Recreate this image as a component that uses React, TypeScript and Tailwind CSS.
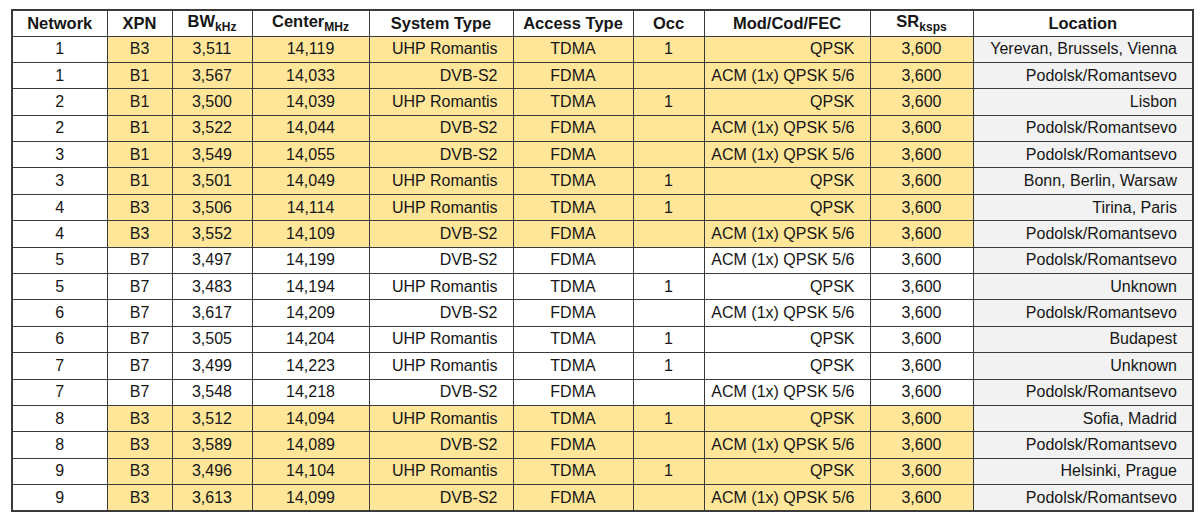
const rows: [string, string, string, string, string, string, string, string, string][] = [
  ['1', 'B3', '3,511', '14,119', 'UHP Romantis', 'TDMA', '1', 'QPSK', 'Yerevan, Brussels, Vienna'],
  ['1', 'B1', '3,567', '14,033', 'DVB-S2', 'FDMA', '', 'ACM (1x) QPSK 5/6', 'Podolsk/Romantsevo'],
  ['2', 'B1', '3,500', '14,039', 'UHP Romantis', 'TDMA', '1', 'QPSK', 'Lisbon'],
  ['2', 'B1', '3,522', '14,044', 'DVB-S2', 'FDMA', '', 'ACM (1x) QPSK 5/6', 'Podolsk/Romantsevo'],
  ['3', 'B1', '3,549', '14,055', 'DVB-S2', 'FDMA', '', 'ACM (1x) QPSK 5/6', 'Podolsk/Romantsevo'],
  ['3', 'B1', '3,501', '14,049', 'UHP Romantis', 'TDMA', '1', 'QPSK', 'Bonn, Berlin, Warsaw'],
  ['4', 'B3', '3,506', '14,114', 'UHP Romantis', 'TDMA', '1', 'QPSK', 'Tirina, Paris'],
  ['4', 'B3', '3,552', '14,109', 'DVB-S2', 'FDMA', '', 'ACM (1x) QPSK 5/6', 'Podolsk/Romantsevo'],
  ['5', 'B7', '3,497', '14,199', 'DVB-S2', 'FDMA', '', 'ACM (1x) QPSK 5/6', 'Podolsk/Romantsevo'],
  ['5', 'B7', '3,483', '14,194', 'UHP Romantis', 'TDMA', '1', 'QPSK', 'Unknown'],
  ['6', 'B7', '3,617', '14,209', 'DVB-S2', 'FDMA', '', 'ACM (1x) QPSK 5/6', 'Podolsk/Romantsevo'],
  ['6', 'B7', '3,505', '14,204', 'UHP Romantis', 'TDMA', '1', 'QPSK', 'Budapest'],
  ['7', 'B7', '3,499', '14,223', 'UHP Romantis', 'TDMA', '1', 'QPSK', 'Unknown'],
  ['7', 'B7', '3,548', '14,218', 'DVB-S2', 'FDMA', '', 'ACM (1x) QPSK 5/6', 'Podolsk/Romantsevo'],
  ['8', 'B3', '3,512', '14,094', 'UHP Romantis', 'TDMA', '1', 'QPSK', 'Sofia, Madrid'],
  ['8', 'B3', '3,589', '14,089', 'DVB-S2', 'FDMA', '', 'ACM (1x) QPSK 5/6', 'Podolsk/Romantsevo'],
  ['9', 'B3', '3,496', '14,104', 'UHP Romantis', 'TDMA', '1', 'QPSK', 'Helsinki, Prague'],
  ['9', 'B3', '3,613', '14,099', 'DVB-S2', 'FDMA', '', 'ACM (1x) QPSK 5/6', 'Podolsk/Romantsevo'],
];

const widths = ['w-[95px]', 'w-[65px]', 'w-[80px]', 'w-[117px]', 'w-[144px]', 'w-[120px]', 'w-[71px]', 'w-[166px]', 'w-[103px]', 'w-[220px]'];

// Excel-ish cell: thin dark border, no wrapping
const cell = 'border border-[#3a3a3a] px-[4px] p-0 leading-none whitespace-nowrap overflow-hidden';

function Sub({ children }: { children: string }) {
  return <span className="text-[12px] align-[-4px]">{children}</span>;
}

export default function App() {
  return (
    <div className="bg-white w-[1200px] h-[519px] overflow-hidden pt-[9px] pl-[11px] font-['Liberation_Sans',Arial,sans-serif] text-[16px] text-[#161616]">
      <table className="table-fixed border-collapse border-2 border-[#3a3a3a] w-[1182px]">
        <colgroup>
          {widths.map((w) => (
            <col key={w} className={w} />
          ))}
        </colgroup>
        <thead>
          <tr className="h-[26px] bg-white text-[16.5px]">
            <th className={cell + ' font-bold'}>Network</th>
            <th className={cell + ' font-bold'}>XPN</th>
            <th className={cell + ' font-bold'}>BW<Sub>kHz</Sub></th>
            <th className={cell + ' font-bold'}>Center<Sub>MHz</Sub></th>
            <th className={cell + ' font-bold'}>System Type</th>
            <th className={cell + ' font-bold'}>Access Type</th>
            <th className={cell + ' font-bold'}>Occ</th>
            <th className={cell + ' font-bold'}>Mod/Cod/FEC</th>
            <th className={cell + ' font-bold'}>SR<Sub>ksps</Sub></th>
            <th className={cell + ' font-bold'}>Location</th>
          </tr>
        </thead>
        <tbody>
          {rows.map((r, i) => {
            const fill = r[1] === 'B7' ? 'bg-white' : 'bg-[#ffe699]';
            return (
              <tr key={i} className="h-[26.4px]">
                <td className={cell + ' bg-white text-center'}>{r[0]}</td>
                <td className={cell + ' text-center ' + fill}>{r[1]}</td>
                <td className={cell + ' text-center ' + fill}>{r[2]}</td>
                <td className={cell + ' text-center ' + fill}>{r[3]}</td>
                <td className={cell + ' text-right pr-[15px] ' + fill}>{r[4]}</td>
                <td className={cell + ' text-center ' + fill}>{r[5]}</td>
                <td className={cell + ' text-center ' + fill}>{r[6]}</td>
                <td className={cell + ' text-right pr-[15px] ' + fill}>{r[7]}</td>
                <td className={cell + ' text-center ' + fill}>{'3,600'}</td>
                <td className={cell + ' text-right pr-[15px] bg-[#f2f2f2]'}>{r[8]}</td>
              </tr>
            );
          })}
        </tbody>
      </table>
    </div>
  );
}
